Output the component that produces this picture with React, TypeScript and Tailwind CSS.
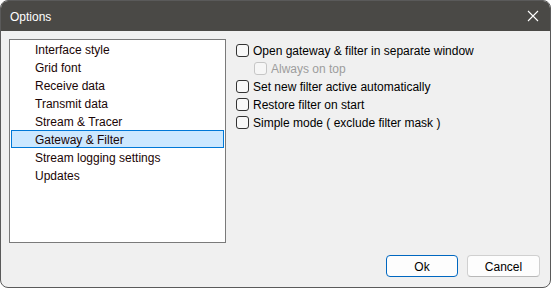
const items = [
  "Interface style",
  "Grid font",
  "Receive data",
  "Transmit data",
  "Stream & Tracer",
  "Gateway & Filter",
  "Stream logging settings",
  "Updates",
];

const selected = "Gateway & Filter";

function CheckBox({ label, disabled, indent }: { label: string; disabled?: boolean; indent?: boolean }) {
  return (
    <div className={`flex h-[18px] items-center gap-[4px] ${indent ? "pl-[18px]" : ""}`}>
      <span
        className={`h-[13px] w-[13px] shrink-0 rounded-[3px] border ${
          disabled ? "border-[#c6c6c6] bg-[#f6f6f6]" : "border-[#333333] bg-[#f8f8f8]"
        }`}
      />
      <span className={`pt-[2px] ${disabled ? "text-[#9d9d9d]" : "text-black"}`}>{label}</span>
    </div>
  );
}

export default function App() {
  return (
    <div className="h-[288px] w-[551px] bg-white">
      <div className="flex h-full w-full flex-col overflow-hidden rounded-[8px] border border-[#5a5a5a] bg-[#f0f0f0] font-['Liberation_Sans',sans-serif] text-[12px] leading-none">
        <div className="flex h-[30px] shrink-0 items-center justify-between bg-[#4a4946] pl-[9px] pr-[10px]">
          <span className="pt-[2px] text-white">Options</span>
          <svg width="12" height="12" viewBox="0 0 12 12" className="mr-[1px]">
            <path d="M1 1 L11 11 M11 1 L1 11" stroke="#ffffff" strokeWidth="1.1" />
          </svg>
        </div>

        <div className="flex flex-1 flex-col">
          <div className="flex pl-[8px] pt-[8px]">
            <div className="h-[204px] w-[217px] border border-[#7a7a7a] bg-white">
              {items.map((it) =>
                it === selected ? (
                  <div
                    key={it}
                    className="mx-[1px] flex h-[18px] items-center border border-[#0078d7] bg-[#cce8ff] pl-[23px] pt-[2px] text-[#1a0505]"
                  >
                    {it}
                  </div>
                ) : (
                  <div key={it} className="flex h-[18px] items-center pl-[25px] pt-[2px] text-[#1a0505]">
                    {it}
                  </div>
                )
              )}
            </div>

            <div className="ml-[10px] flex flex-col pt-[2px]">
              <CheckBox label="Open gateway & filter in separate window" />
              <CheckBox label="Always on top" disabled indent />
              <CheckBox label="Set new filter active automatically" />
              <CheckBox label="Restore filter on start" />
              <CheckBox label="Simple mode ( exclude filter mask )" />
            </div>
          </div>

          <div className="mt-auto flex justify-end gap-[9px] pb-[10px] pr-[10px]">
            <button className="h-[22px] w-[72px] rounded-[4px] border border-[#0067c0] bg-[#fdfdfd] pt-[1px] text-black">
              Ok
            </button>
            <button className="h-[22px] w-[73px] rounded-[4px] border border-[#d0d0d0] border-b-[#b8b8b8] bg-[#fdfdfd] pt-[1px] text-black">
              Cancel
            </button>
          </div>
        </div>
      </div>
    </div>
  );
}
